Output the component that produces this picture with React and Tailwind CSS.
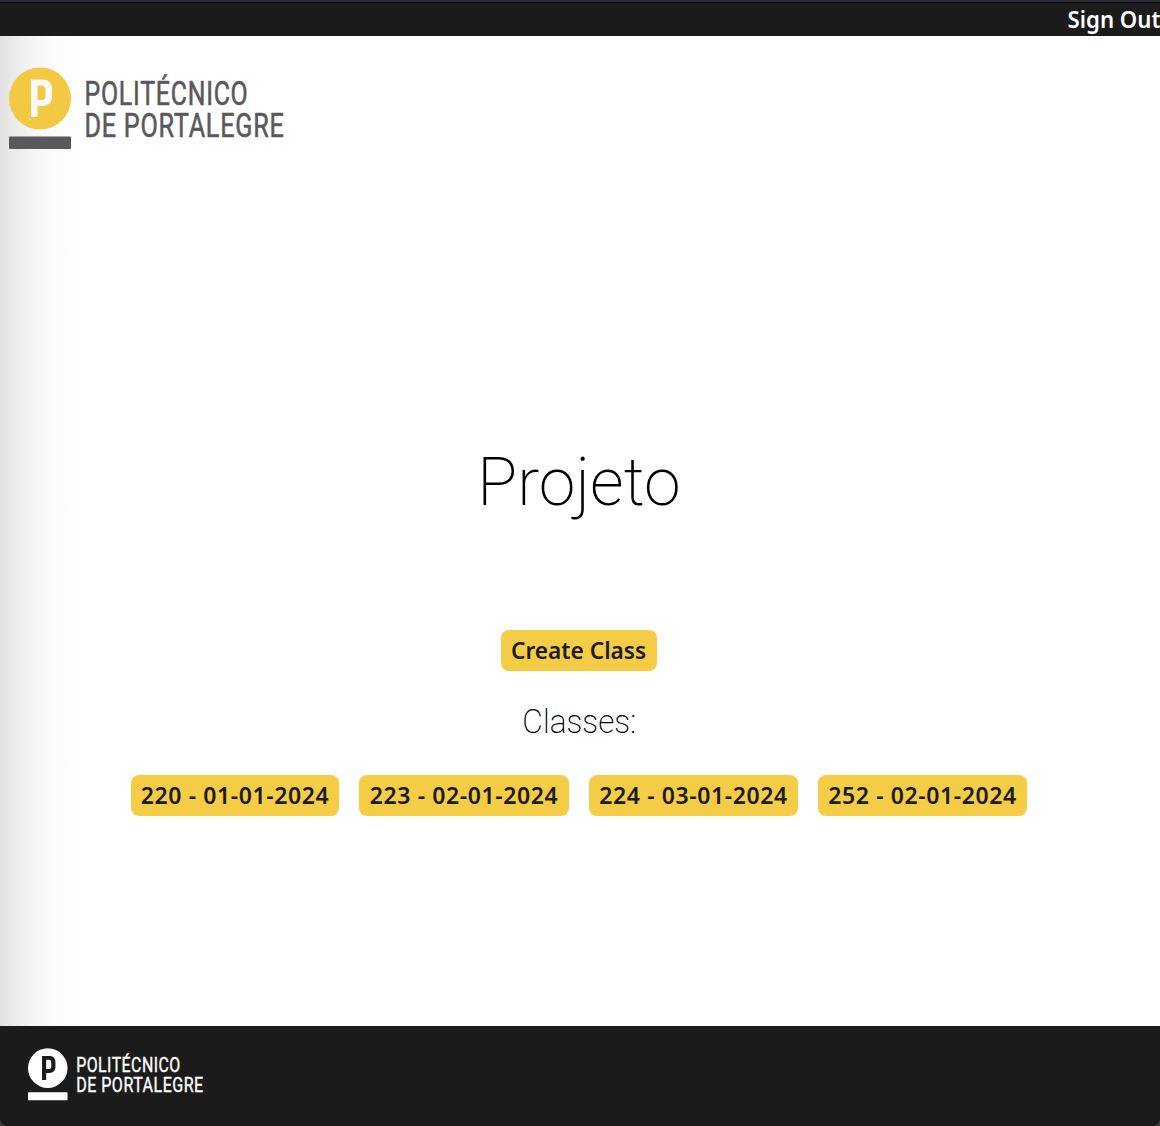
const classes = [
  { name: "220 - 01-01-2024", width: "w-[208px]" },
  { name: "223 - 02-01-2024", width: "w-[210px]" },
  { name: "224 - 03-01-2024", width: "w-[209px]" },
  { name: "252 - 02-01-2024", width: "w-[209px]" },
];

function Logo({ className, disc, ink, letter }) {
  return (
    <svg className={`overflow-visible ${className}`} viewBox="0 0 276 83" role="img" aria-label="Politécnico de Portalegre">
      <circle cx="31" cy="31.5" r="31" fill={disc} />
      <path
        fill={letter}
        fillRule="evenodd"
        d="M22 12.5H33.5C40 12.5 43 16.5 43 22.5V29C43 35.5 39.5 39 33.5 39H28.5V50H22ZM28.5 18.5V33H32.5C35.5 33 36.5 31.5 36.5 28.5V23C36.5 20 35.5 18.5 32.5 18.5Z"
      />
      <rect y="69.5" width="62" height="12.5" rx="1" fill={ink} />
      <g fill={ink} stroke={ink} strokeWidth="0.6" fontFamily="Roboto, sans-serif" fontSize="33" fontWeight="400">
        <text x="75.5" y="37.5" textLength="164" lengthAdjust="spacingAndGlyphs" letterSpacing="1">POLITÉCNICO</text>
        <text x="75.5" y="69.5" textLength="200" lengthAdjust="spacingAndGlyphs" letterSpacing="1">DE PORTALEGRE</text>
      </g>
    </svg>
  );
}

function YellowButton({ width, textClass, children }) {
  return (
    <button className={`flex h-[41px] items-center justify-center rounded-lg bg-[#f5cc45] text-[#1b1b1b] ${width}`}>
      <span className={`inline-block shrink-0 whitespace-nowrap leading-none ${textClass}`}>{children}</span>
    </button>
  );
}

export default function App() {
  return (
    <div className="flex h-[1126px] w-[1160px] flex-col overflow-hidden bg-[#3a3a3a] font-['Noto_Sans',sans-serif]">
      <header className="flex h-9 shrink-0 justify-end border-t-2 border-[#2b2b33] bg-[#1b1b1b] shadow-[inset_0_1px_0_#0c0c0c]">
        <a className="mt-[5px] mr-[-1px] inline-block origin-right scale-x-[0.925] text-2xl leading-6 font-semibold whitespace-nowrap text-white">Sign Out</a>
      </header>

      <main className="flex h-[990px] shrink-0 flex-col items-center bg-[linear-gradient(to_right,#e2e2e2_0px,#ebebeb_14px,#f6f6f6_34px,#fcfcfc_55px,#ffffff_85px)]">
        <div className="w-full pt-[31px] pl-[9px]">
          <Logo className="h-[83px] w-[276px]" disc="#f3c944" ink="#59595b" letter="#fafafa" />
        </div>
        <h1 className="mt-[293px] mr-[2px] h-20 font-[Roboto,sans-serif] text-[66px] leading-[80px] font-extralight text-black">Projeto</h1>
        <div className="mt-[107px] mr-[2px]">
          <YellowButton width="w-[156px]" textClass="text-2xl font-semibold scale-x-[0.945] -translate-y-px">Create Class</YellowButton>
        </div>
        <h2 className="mt-[31px] mr-[2px] h-10 scale-x-[0.96] font-[Roboto,sans-serif] text-[33px] leading-10 font-extralight text-black">Classes:</h2>
        <div className="mt-[33px] mr-[2px] flex gap-5">
          {classes.map(({ name, width }) => (
            <YellowButton key={name} width={width} textClass="text-[23px] font-semibold tracking-[0.6px]">{name}</YellowButton>
          ))}
        </div>
      </main>

      <footer className="flex h-[100px] shrink-0 rounded-b-lg bg-[#1b1b1b] pt-[22px] pl-[28px]">
        <Logo className="h-[53px] w-[176px]" disc="#ffffff" ink="#ffffff" letter="#1b1b1b" />
      </footer>
    </div>
  );
}
